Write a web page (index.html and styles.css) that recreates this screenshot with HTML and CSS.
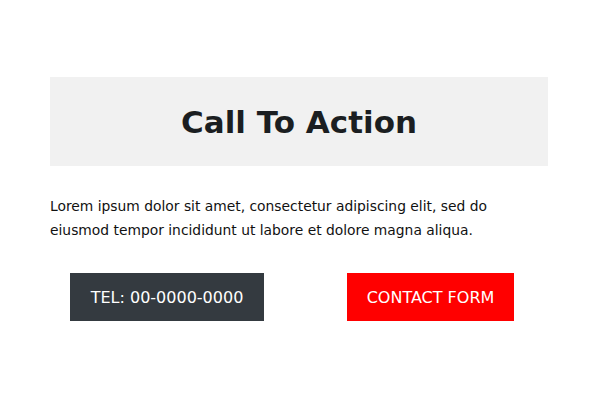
FILE: index.html
```html
<!DOCTYPE html>
<html>
<head>
<meta charset="utf-8">
<link rel="stylesheet" href="styles.css">
</head>
<body>
<section class="cta">
  <div class="cta-head"><h1 class="cta-title">Call To Action</h1></div>
  <p class="cta-text">Lorem ipsum dolor sit amet, consectetur adipiscing elit, sed do eiusmod tempor incididunt ut labore et dolore magna aliqua.</p>
  <div class="cta-buttons">
    <a class="btn btn-dark">TEL: 00-0000-0000</a>
    <a class="btn btn-red">CONTACT FORM</a>
  </div>
</section>
</body>
</html>
```

FILE: styles.css
```css
html, body { margin: 0; padding: 0; background: #fff; }
body { font-family: "DejaVu Sans", Verdana, sans-serif; color: #212529; }
.cta { width: 498px; margin: 0 0 0 50px; padding-top: 77px; }
.cta-head { background: #f1f1f1; height: 89px; display: flex; align-items: center; justify-content: center; }
.cta-title { margin: 0; font-size: 31px; font-weight: bold; color: #1b1e21; }
.cta-text { margin: 28px 0 0; font-size: 13.85px; line-height: 24px; color: #111; }
.cta-buttons { display: flex; margin-top: 31px; padding-left: 20px; gap: 83px; }
.btn { display: flex; align-items: center; justify-content: center; height: 48px; font-size: 16px; color: #fff; }
.btn-dark { background: #343a40; width: 194px; }
.btn-red { background: #ff0000; width: 167px; }
```
